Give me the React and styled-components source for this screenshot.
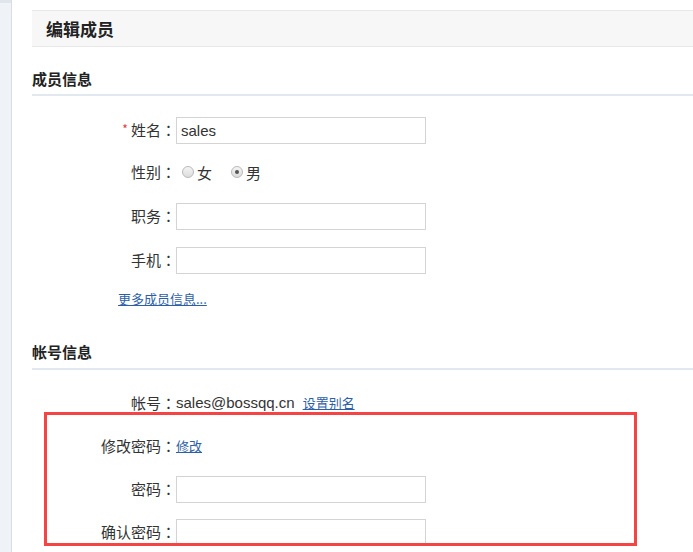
import React from "react";
import styled, { createGlobalStyle } from "styled-components";

const GlobalStyle = createGlobalStyle`
  html, body {
    margin: 0;
    padding: 0;
    background: #fff;
  }
  body {
    font-family: "Noto Sans CJK SC", "Liberation Sans", sans-serif;
    font-size: 14px;
    color: #333;
    overflow: hidden;
  }
`;

const Page = styled.div`
  display: flex;
  min-height: 100vh;
`;

const SideStrip = styled.div`
  width: 11px;
  flex-shrink: 0;
  background: linear-gradient(#dfe5eb 0, #dfe5eb 3px, #eff2f6 3px);
  border-right: 1px solid #d9dee5;
`;

const Main = styled.div`
  flex: 1;
  padding-left: 20px;
  padding-top: 10px;
`;

const Header = styled.div`
  height: 35px;
  display: flex;
  align-items: center;
  padding-left: 14px;
  background: #f7f7f7;
  border-top: 1px solid #e8e8e8;
  border-bottom: 1px solid #e8e8e8;
`;

const Title = styled.h1`
  margin: 0;
  font-size: 17px;
  font-weight: bold;
  color: #222;
`;

const SectionTitle = styled.h2`
  margin: ${(p) => p.$top}px 0 0;
  padding-bottom: ${(p) => p.$pad}px;
  font-size: 15px;
  line-height: 20px;
  font-weight: bold;
  color: #222;
  border-bottom: 2px solid #e1e8f0;
`;

const Rows = styled.div`
  display: flex;
  flex-direction: column;
  margin-top: ${(p) => p.$top}px;
`;

const Row = styled.div`
  display: flex;
  align-items: center;
  height: ${(p) => p.$h || 27}px;
  margin-bottom: ${(p) => p.$gap}px;
`;

const Label = styled.label`
  width: 144px;
  flex-shrink: 0;
  text-align: right;
  font-size: 15px;
  color: #333;
  white-space: nowrap;
  margin-top: -2px;
`;

const Colon = styled.span`
  font-family: "Noto Sans CJK TC", "Noto Sans CJK SC", sans-serif;
`;

const Star = styled.span`
  color: #e0393e;
  font-size: 12px;
  margin-right: 3px;
  vertical-align: 2px;
`;

const TextInput = styled.input`
  box-sizing: border-box;
  width: 250px;
  height: 27px;
  border: 1px solid #d4d4d4;
  padding: 0 4px;
  font-family: "Liberation Sans", sans-serif;
  font-size: 15px;
  color: #333;
  outline: none;
`;

const Value = styled.span`
  font-family: "Liberation Sans", sans-serif;
  font-size: 15px;
  color: #333;
  margin-top: -2px;
`;

const TextLink = styled.a`
  font-size: 13px;
  color: #2d5fa8;
  text-decoration: underline;
  margin-left: ${(p) => p.$ml || 0}px;
  margin-top: -2px;
  cursor: pointer;
`;

const MoreLink = styled(TextLink)`
  display: block;
  line-height: 20px;
  margin: 15px 0 0 86px;
  width: fit-content;
`;

const RadioGroup = styled.div`
  display: flex;
  align-items: center;
`;

const RadioItem = styled.span`
  display: flex;
  align-items: center;
  margin-left: ${(p) => p.$ml}px;
  font-size: 15px;
`;

const RadioDot = styled.span`
  position: relative;
  width: 12px;
  height: 12px;
  box-sizing: border-box;
  border-radius: 50%;
  border: 1px solid #b9b9b9;
  background: linear-gradient(#f4f4f4, #dcdcdc);
  margin-right: 3px;
  &::after {
    content: "";
    display: ${(p) => (p.$checked ? "block" : "none")};
    position: absolute;
    left: 3px;
    top: 3px;
    width: 4px;
    height: 4px;
    border-radius: 50%;
    background: #555;
  }
`;

const Group = styled.div`
  position: relative;
`;

const Highlight = styled.div`
  position: absolute;
  top: -21px;
  left: 12px;
  width: 593px;
  bottom: 0;
  box-sizing: border-box;
  border: 3px solid #f64343;
  pointer-events: none;
`;

const FieldLabel = ({ children, required }) => (
  <Label>
    {required && <Star>*</Star>}
    {children}
    <Colon>：</Colon>
  </Label>
);

const App = () => {
  return (
    <Page>
      <GlobalStyle />
      <SideStrip />
      <Main>
        <Header>
          <Title>编辑成员</Title>
        </Header>

        <SectionTitle $top={22} $pad={5}>成员信息</SectionTitle>
        <Rows $top={21}>
          <Row $gap={17}>
            <FieldLabel required>姓名</FieldLabel>
            <TextInput defaultValue="sales" />
          </Row>
          <Row $h={22} $gap={20}>
            <FieldLabel>性别</FieldLabel>
            <RadioGroup>
              <RadioItem $ml={6}><RadioDot />女</RadioItem>
              <RadioItem $ml={19}><RadioDot $checked />男</RadioItem>
            </RadioGroup>
          </Row>
          <Row $gap={17}>
            <FieldLabel>职务</FieldLabel>
            <TextInput />
          </Row>
          <Row $gap={0}>
            <FieldLabel>手机</FieldLabel>
            <TextInput />
          </Row>
        </Rows>
        <MoreLink>更多成员信息...</MoreLink>

        <SectionTitle $top={33} $pad={6}>帐号信息</SectionTitle>
        <Rows $top={20}>
          <Row $gap={16}>
            <FieldLabel>帐号</FieldLabel>
            <Value>sales@bossqq.cn</Value>
            <TextLink $ml={8}>设置别名</TextLink>
          </Row>
          <Group>
            <Row $gap={16}>
              <FieldLabel>修改密码</FieldLabel>
              <TextLink>修改</TextLink>
            </Row>
            <Row $gap={16}>
              <FieldLabel>密码</FieldLabel>
              <TextInput type="password" />
            </Row>
            <Row $gap={0}>
              <FieldLabel>确认密码</FieldLabel>
              <TextInput type="password" />
            </Row>
            <Highlight />
          </Group>
        </Rows>
      </Main>
    </Page>
  );
};

export default App;
